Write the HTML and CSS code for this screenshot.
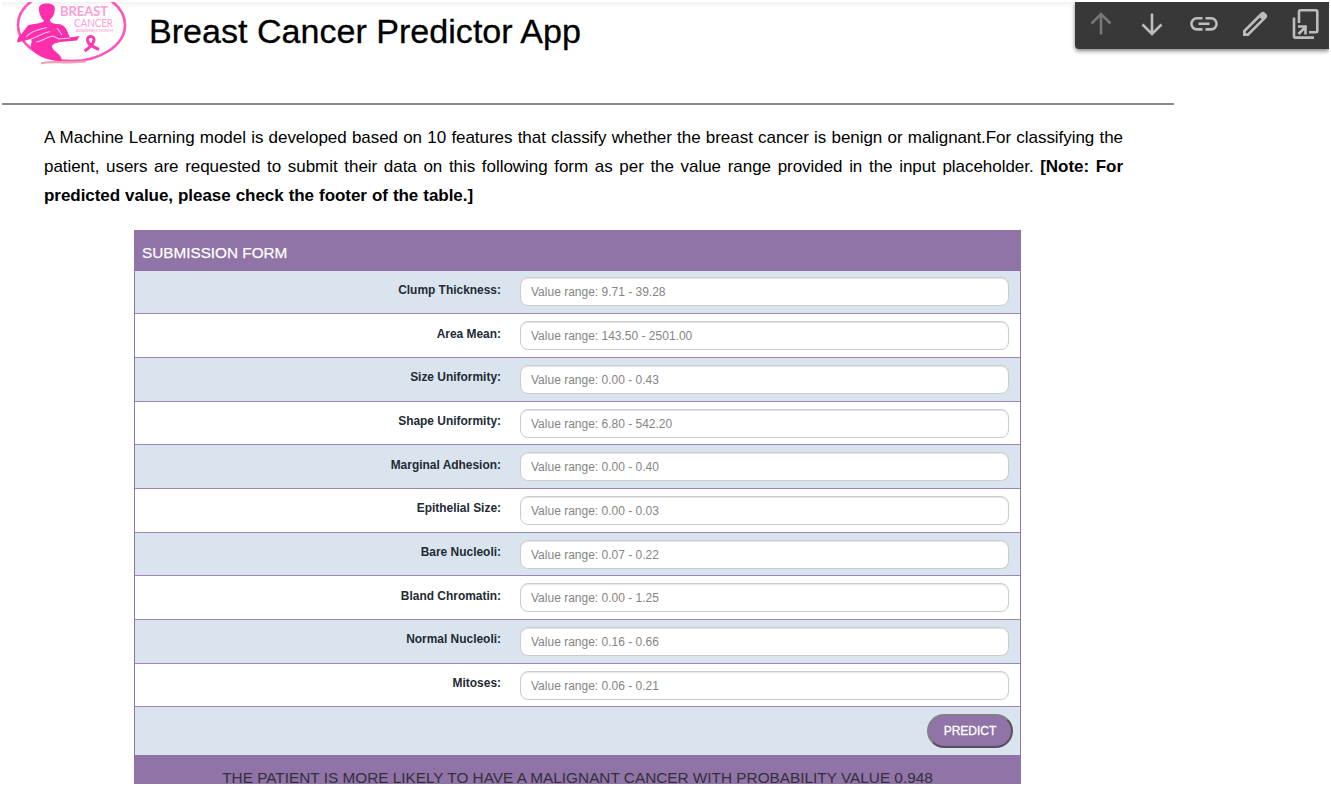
FILE: index.html
```html
<!DOCTYPE html>
<html lang="en">
<head>
<meta charset="utf-8">
<title>Breast Cancer Predictor App</title>
<link rel="stylesheet" href="styles.css">
</head>
<body>
<div class="page">
  <header class="header">
    <svg class="logo" viewBox="0 0 134 66" width="134" height="66">
      <ellipse cx="71.500" cy="25" rx="53.500" ry="36" fill="none" stroke="#ff52bb" stroke-width="2.600"/>
      <path d="M41 63.500 C48 60 66 64 86 61.500" fill="none" stroke="#e9a4b4" stroke-width="2.200"/>
      <path d="M39 11 C38 5 42 3.500 47 3.500 C53 3.500 56 6 54.500 11 C54.500 16 51 18.500 50 19.500 C50 23 54 24 58 24 C64 24.500 66 28 68 33 L70 37.500 L79.500 36 L77 40.500 L60 42 C54 43 51 45 52.500 48 C55 53 61 53 62 61 C50 61 37 57 31.500 49 C29.500 45 33 42 31 39 L17 42.500 L18 37.500 C22 34 25 29 28 25.500 C33 23.500 44 23.500 44 20.500 C41 18.500 40 15 39 11 Z" fill="#ff2fac"/>
      <path d="M26 37 C31 31 39 29 47 27.500 M31 39 C39 36 42 33 50 31.500 M36 42 C42 42 43 38 53 36 L59 39 L70 38 M57 28 L62 35" fill="none" stroke="#ffc4e8" stroke-width="1.100"/>
      <text class="logo-big" x="60" y="16" textLength="48" lengthAdjust="spacingAndGlyphs">BREAST</text>
      <text class="logo-mid" x="74" y="26.500" textLength="39" lengthAdjust="spacingAndGlyphs">CANCER</text>
      <text class="logo-small" x="76" y="32" textLength="37" lengthAdjust="spacingAndGlyphs">AWARENESS MONTH</text>
      <path d="M84.500 51 C89 48.500 94.500 43 94 39 C93 35.500 87 35.500 87.500 40 C88 45 94 47.500 99 49.500" fill="none" stroke="#ff3aae" stroke-width="3"/>
    </svg>
    <h1 class="title">Breast Cancer Predictor App</h1>
  </header>

  <div class="intro">
    <p class="line">A Machine Learning model is developed based on 10 features that classify whether the breast cancer is benign or malignant.For classifying the</p>
    <p class="line">patient, users are requested to submit their data on this following form as per the value range provided in the input placeholder. <b>[Note: For</b></p>
    <p class="line last"><b>predicted value, please check the footer of the table.]</b></p>
  </div>

  <form class="form">
    <div class="form-head">SUBMISSION FORM</div>
    <div class="row"><label class="label">Clump Thickness:</label><input class="input" placeholder="Value range: 9.71 - 39.28"></div>
    <div class="row"><label class="label">Area Mean:</label><input class="input" placeholder="Value range: 143.50 - 2501.00"></div>
    <div class="row"><label class="label">Size Uniformity:</label><input class="input" placeholder="Value range: 0.00 - 0.43"></div>
    <div class="row"><label class="label">Shape Uniformity:</label><input class="input" placeholder="Value range: 6.80 - 542.20"></div>
    <div class="row"><label class="label">Marginal Adhesion:</label><input class="input" placeholder="Value range: 0.00 - 0.40"></div>
    <div class="row"><label class="label">Epithelial Size:</label><input class="input" placeholder="Value range: 0.00 - 0.03"></div>
    <div class="row"><label class="label">Bare Nucleoli:</label><input class="input" placeholder="Value range: 0.07 - 0.22"></div>
    <div class="row"><label class="label">Bland Chromatin:</label><input class="input" placeholder="Value range: 0.00 - 1.25"></div>
    <div class="row"><label class="label">Normal Nucleoli:</label><input class="input" placeholder="Value range: 0.16 - 0.66"></div>
    <div class="row"><label class="label">Mitoses:</label><input class="input" placeholder="Value range: 0.06 - 0.21"></div>
    <div class="actions"><button class="predict" type="button">PREDICT</button></div>
    <div class="result"><span class="result-text">THE PATIENT IS MORE LIKELY TO HAVE A MALIGNANT CANCER WITH PROBABILITY VALUE 0.948</span></div>
  </form>

  <div class="toolbar">
    <svg class="tool dim" viewBox="0 0 28 32"><path d="M14 26.500V6M4.500 15.500 14 6l9.500 9.500"/></svg>
    <svg class="tool" viewBox="0 0 28 32"><path d="M14 5.500V26M4.500 16.500 14 26l9.500-9.500"/></svg>
    <svg class="tool" viewBox="0 0 28 32"><path d="M12.500 10.200H7a5.600 5.600 0 0 0 0 11.200h5.500M15.500 10.200H21a5.600 5.600 0 0 1 0 11.200h-5.500M8.500 15.800h11"/></svg>
    <svg class="tool" viewBox="0 0 28 32"><path class="solid" fill-rule="evenodd" d="M2 28v-5.500L18.500 6l2-1.700q2-1.100 3.700.6l1.500 1.600q1.300 1.600 0 3.200L7.500 28ZM4.800 23.600v1.700h1.700L20.600 11.200 18.900 9.500Z"/></svg>
    <svg class="tool" viewBox="0 0 28 32"><path d="M7 15V3.800Q7 2.300 8.500 2.300h15.300Q25.300 2.300 25.300 3.800v19.300q0 1.200-1.500 1.200H17M2 9.500v18.800q0 1.300 1.300 1.300H22M6.500 26 13 19.500M6 18.500h7.500v8"/></svg>
  </div>
</div>
</body>
</html>
```
FILE: styles.css
```css
* { box-sizing: border-box; }
html { background: #fff; }
body { margin: 0; font-family: "Liberation Sans", Arial, sans-serif; color: #000; }
.page {
  position: relative;
  width: 1327px;
  height: 782px;
  margin: 2px;
  overflow: hidden;
  background: linear-gradient(#f2f2f2, #fff 6px);
}
.header {
  display: flex;
  width: 1172px;
  height: 103px;
  border-bottom: 2px solid #8b8b8b;
}
.logo { flex: none; margin: -2px 14px 0 -2px; font-family: Lato, sans-serif; }
.logo-big { font-size: 14px; font-weight: 700; fill: #ff9cd6; }
.logo-mid { font-size: 11px; fill: #ff9cd6; }
.logo-small { font-size: 3.5px; fill: #ff8dcf; }
.title {
  margin: 9px 0 0 1px;
  font-size: 34.1px;
  font-weight: 400;
  line-height: 40px;
  white-space: nowrap;
  -webkit-text-stroke: 0.3px #000;
}
.intro { width: 1079px; margin: 18px 0 0 42px; font-size: 17px; line-height: 29px; }
.line { margin: 0; height: 29px; text-align-last: justify; white-space: nowrap; letter-spacing: -0.05px; }
.last { width: 429px; }
.form {
  width: 887px;
  margin: 20px 0 0 132px;
  border: 1px solid #9073a7;
  border-bottom: 0;
}
.form-head {
  height: 39.6px;
  padding: 4px 7px 0;
  background: #9073a7;
  color: #fff;
  font-size: 15.3px;
  line-height: 36px;
  -webkit-text-stroke: 0.25px #fff;
}
.row {
  display: flex;
  align-items: center;
  height: 43.7px;
  padding-right: 11px;
  border-bottom: 1px solid #9e86b8;
  background: #dae4ee;
}
.row:nth-child(odd) { background: #fff; }
.label {
  width: 366px;
  margin: 0 19px 4px 0;
  color: #222b35;
  font-size: 11.95px;
  font-weight: 700;
  text-align: right;
}
.input {
  flex: 1;
  height: 29px;
  padding: 1px 10px 0;
  border: 1px solid #ccc;
  border-radius: 8px;
  outline: 0;
  background: #fff;
  box-shadow: inset 0 1px 1px #e4e4e4;
  font: 12px "Liberation Sans", Arial, sans-serif;
}
.input::placeholder { color: #858585; opacity: 1; }
.actions {
  display: flex;
  justify-content: flex-end;
  height: 48px;
  padding: 7px 7px 0 0;
  background: #dae4ee;
}
.predict {
  width: 86px;
  height: 34px;
  padding: 0;
  border: 2px solid;
  border-color: #857f8a #59505f #59505f #857f8a;
  border-radius: 17px;
  background: #9073a7;
  color: #fff;
  font: 12px "Liberation Sans", Arial, sans-serif;
  -webkit-text-stroke: 0.3px #fff;
}
.result {
  height: 48px;
  padding-top: 5px;
  background: #9073a7;
  color: #33303a;
  font-size: 15.35px;
  line-height: 36px;
  text-align: center;
  white-space: nowrap;
}
.toolbar {
  position: absolute;
  top: 0;
  right: 0;
  display: flex;
  gap: 23.3px;
  width: 254px;
  height: 47px;
  padding: 6px 0 0 12px;
  border-bottom-left-radius: 4px;
  background: #383838;
  box-shadow: 0 2px 4px rgba(0, 0, 0, .5);
}
.tool { flex: none; width: 28px; height: 32px; fill: none; stroke: #bdbdbd; stroke-width: 2.6; }
.dim { stroke: #777; }
.solid { fill: #bdbdbd; stroke: none; }
```
